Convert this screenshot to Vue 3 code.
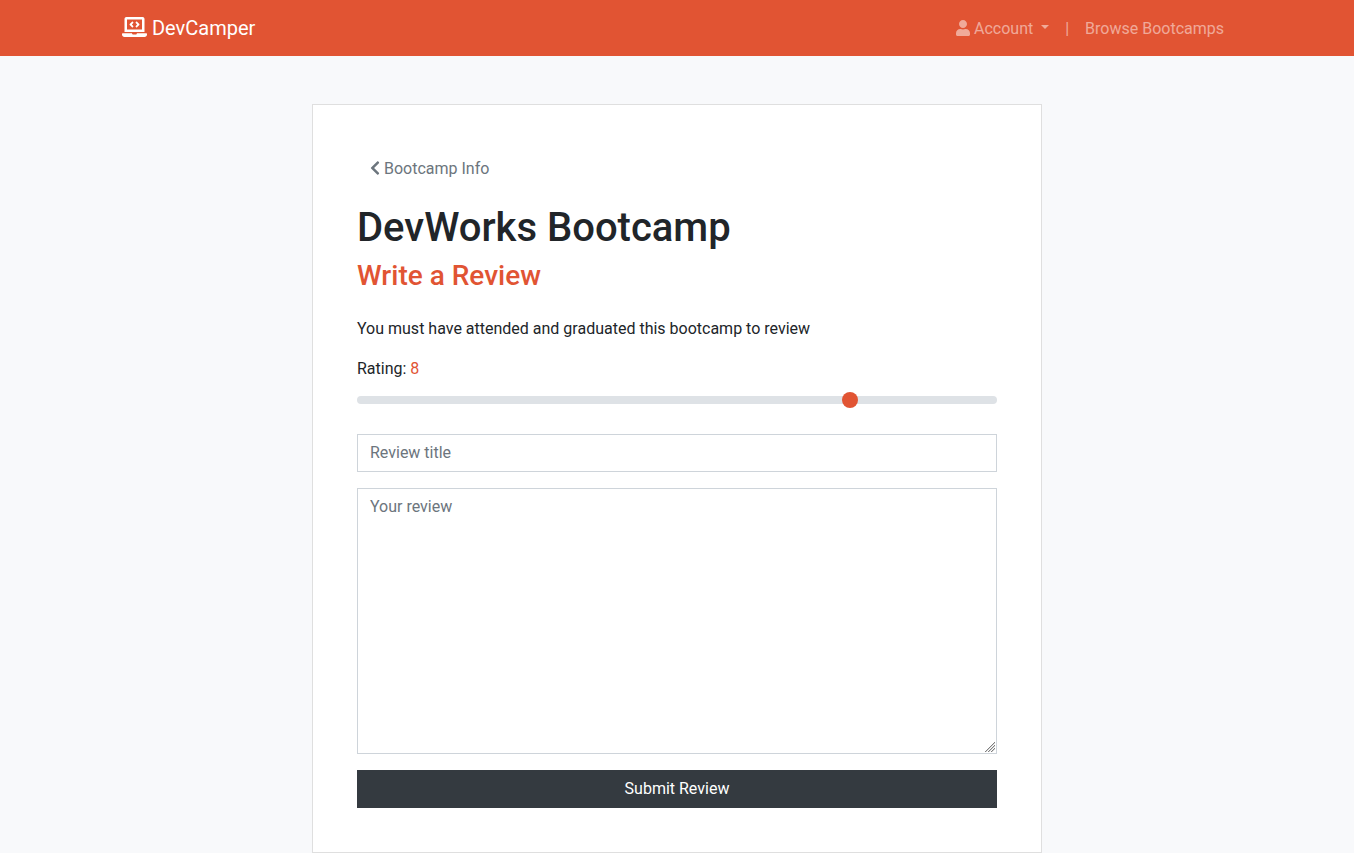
<script setup>
import { ref } from 'vue'

const rating = ref(8)
const title = ref('')
const review = ref('')
</script>

<template>
  <div class="page">
    <nav class="navbar">
      <div class="container">
        <a class="brand"><svg class="icon laptop" viewBox="0 0 640 512"><path d="M255.03 261.65c6.25 6.25 16.38 6.25 22.63 0l11.31-11.31c6.25-6.25 6.25-16.38 0-22.63L253.25 192l35.71-35.72c6.25-6.25 6.25-16.38 0-22.63l-11.31-11.31c-6.25-6.25-16.38-6.25-22.63 0l-58.34 58.34c-6.25 6.25-6.25 16.38 0 22.63l58.35 58.34zm96.01-11.3l11.31 11.31c6.25 6.25 16.38 6.25 22.63 0l58.34-58.34c6.25-6.25 6.25-16.38 0-22.63l-58.34-58.34c-6.25-6.25-16.38-6.25-22.63 0l-11.31 11.31c-6.25 6.25-6.25 16.38 0 22.63L386.75 192l-35.71 35.72c-6.25 6.25-6.25 16.38 0 22.63zM624 416H381.54c-.74 19.81-14.71 32-32.74 32H288c-18.69 0-33.02-17.47-32.77-32H16c-8.8 0-16 7.2-16 16v16c0 35.2 28.8 64 64 64h512c35.2 0 64-28.8 64-64v-16c0-8.8-7.2-16-16-16zM576 48c0-26.4-21.6-48-48-48H112C85.6 0 64 21.6 64 48v336h512V48zm-64 272H128V64h384v256z" /></svg> DevCamper</a>
        <ul class="nav">
          <li><a class="nav-link dropdown"><svg class="icon user" viewBox="0 0 448 512"><path d="M224 256c70.7 0 128-57.3 128-128S294.7 0 224 0 96 57.3 96 128s57.3 128 128 128zm89.6 32h-16.7c-22.2 10.2-46.9 16-72.9 16s-50.6-5.8-72.9-16h-16.7C60.2 288 0 348.2 0 422.4V464c0 26.5 21.5 48 48 48h352c26.5 0 48-21.5 48-48v-41.6c0-74.2-60.2-134.4-134.4-134.4z" /></svg> Account </a></li>
          <li><a class="nav-link">|</a></li>
          <li><a class="nav-link">Browse Bootcamps</a></li>
        </ul>
      </div>
    </nav>

    <main class="card">
      <a class="back"><svg class="icon chevron" viewBox="0 0 320 512"><path d="M34.52 239.03L228.87 44.69c9.37-9.37 24.57-9.37 33.94 0l22.67 22.67c9.36 9.36 9.37 24.52.04 33.9L131.49 256l154.02 154.75c9.34 9.38 9.32 24.54-.04 33.9l-22.67 22.67c-9.37 9.37-24.57 9.37-33.94 0L34.52 272.97c-9.37-9.37-9.37-24.57 0-33.94z" /></svg> Bootcamp Info</a>
      <h1>DevWorks Bootcamp</h1>
      <h3>Write a Review</h3>
      <p>You must have attended and graduated this bootcamp to review</p>
      <form @submit.prevent>
        <label for="rating">Rating: <span class="accent">{{ rating }}</span></label>
        <input id="rating" v-model="rating" class="range" type="range" min="1" max="10" step="1">
        <input v-model="title" class="control" type="text" placeholder="Review title">
        <div class="area-wrap">
          <textarea v-model="review" class="control area" placeholder="Your review"></textarea>
          <svg class="grip" viewBox="0 0 11 11" shape-rendering="crispEdges">
            <path class="grip-dark" d="M0 10h1v1h-1zM1 9h1v1h-1zM2 8h1v1h-1zM3 7h1v1h-1zM4 6h1v1h-1zM5 5h1v1h-1zM6 4h1v1h-1zM7 3h1v1h-1zM8 2h1v1h-1zM9 1h1v1h-1zM3 10h1v1h-1zM4 9h1v1h-1zM5 8h1v1h-1zM6 7h1v1h-1zM7 6h1v1h-1zM8 5h1v1h-1zM9 4h1v1h-1zM6 10h1v1h-1zM7 9h1v1h-1zM8 8h1v1h-1zM9 7h1v1h-1z" />
            <path class="grip-light" d="M1 10h1v1h-1zM2 9h1v1h-1zM3 8h1v1h-1zM4 7h1v1h-1zM5 6h1v1h-1zM6 5h1v1h-1zM7 4h1v1h-1zM8 3h1v1h-1zM9 2h1v1h-1zM4 10h1v1h-1zM5 9h1v1h-1zM6 8h1v1h-1zM7 7h1v1h-1zM8 6h1v1h-1zM9 5h1v1h-1zM7 10h1v1h-1zM8 9h1v1h-1zM9 8h1v1h-1z" />
          </svg>
        </div>
        <button class="submit" type="submit">Submit Review</button>
      </form>
    </main>
  </div>
</template>

<style>
body {
  margin: 0;
  background: #f8f9fb;
}
</style>

<style scoped>
* {
  box-sizing: border-box;
}
.page {
  font-family: Roboto, "Liberation Sans", sans-serif;
  font-size: 16px;
  line-height: 1.5;
  color: #212529;
}
.icon {
  display: inline-block;
  height: 1em;
  vertical-align: -0.125em;
  fill: currentColor;
  overflow: visible;
}
.laptop {
  width: 1.25em;
  vertical-align: -2px;
}
.user { width: 0.875em; }
.chevron { width: 0.625em; }
.navbar {
  height: 56px;
  background: #e15433;
}
.container {
  display: flex;
  align-items: center;
  justify-content: space-between;
  width: 1140px;
  height: 100%;
  margin: 0 auto;
  padding: 0 15px;
}
.brand {
  font-size: 20px;
  color: #fff;
}
.nav {
  display: flex;
  list-style: none;
  margin: 0;
  padding: 0;
}
.nav-link {
  display: block;
  padding: 9px 8px 7px;
  color: rgba(255, 255, 255, 0.5);
}
.dropdown::after {
  content: "";
  display: inline-block;
  margin-left: 4px;
  vertical-align: 5px;
  border-top: 4.8px solid;
  border-right: 4.8px solid transparent;
  border-left: 4.8px solid transparent;
}
.card {
  width: 730px;
  height: 749px;
  margin: 48px auto 0;
  padding: 28px 44px;
  background: #fff;
  border: 1px solid #dfdfdf;
}
.back {
  display: inline-block;
  margin: 16px 0;
  padding: 8px 13px 7px;
  color: #6c757d;
  vertical-align: middle;
}
h1, h3 {
  font-weight: 500;
  line-height: 1.2;
}
h1 {
  margin: 0 0 7px;
  font-size: 40px;
}
h3 {
  margin: 0 0 24px;
  font-size: 28px;
  color: #e15433;
}
p {
  margin: 0 0 16px;
}
.accent {
  color: #e15433;
}
form {
  display: flex;
  flex-direction: column;
}
label {
  margin-bottom: 8px;
}
.range {
  appearance: none;
  width: 100%;
  height: 22.4px;
  margin: 0 0 23px;
  padding: 0;
  background: transparent;
}
.range::-webkit-slider-runnable-track {
  height: 8px;
  background: #dee2e6;
  border-radius: 16px;
}
.range::-webkit-slider-thumb {
  appearance: none;
  width: 16px;
  height: 16px;
  margin-top: -4px;
  background: #e15433;
  border: 0;
  border-radius: 16px;
}
.control {
  display: block;
  width: 100%;
  height: 38px;
  margin: 0 0 16px;
  padding: 6px 12px;
  font: inherit;
  color: #495057;
  background: #fff;
  border: 1px solid #ced4da;
  border-radius: 0;
}
.control::placeholder {
  color: #6c757d;
  opacity: 1;
}
.area-wrap {
  position: relative;
  margin-bottom: 16px;
}
.area {
  height: 266px;
  margin: 0;
  resize: none;
}
.grip {
  position: absolute;
  right: 1px;
  bottom: 2px;
  width: 11px;
  height: 11px;
  pointer-events: none;
}
.grip-dark { fill: #808080; }
.grip-light { fill: #d4d4d4; }
.submit {
  height: 38px;
  padding: 6px 12px;
  font: inherit;
  color: #fff;
  background: #343a40;
  border: 1px solid #343a40;
  border-radius: 0;
}
</style>
